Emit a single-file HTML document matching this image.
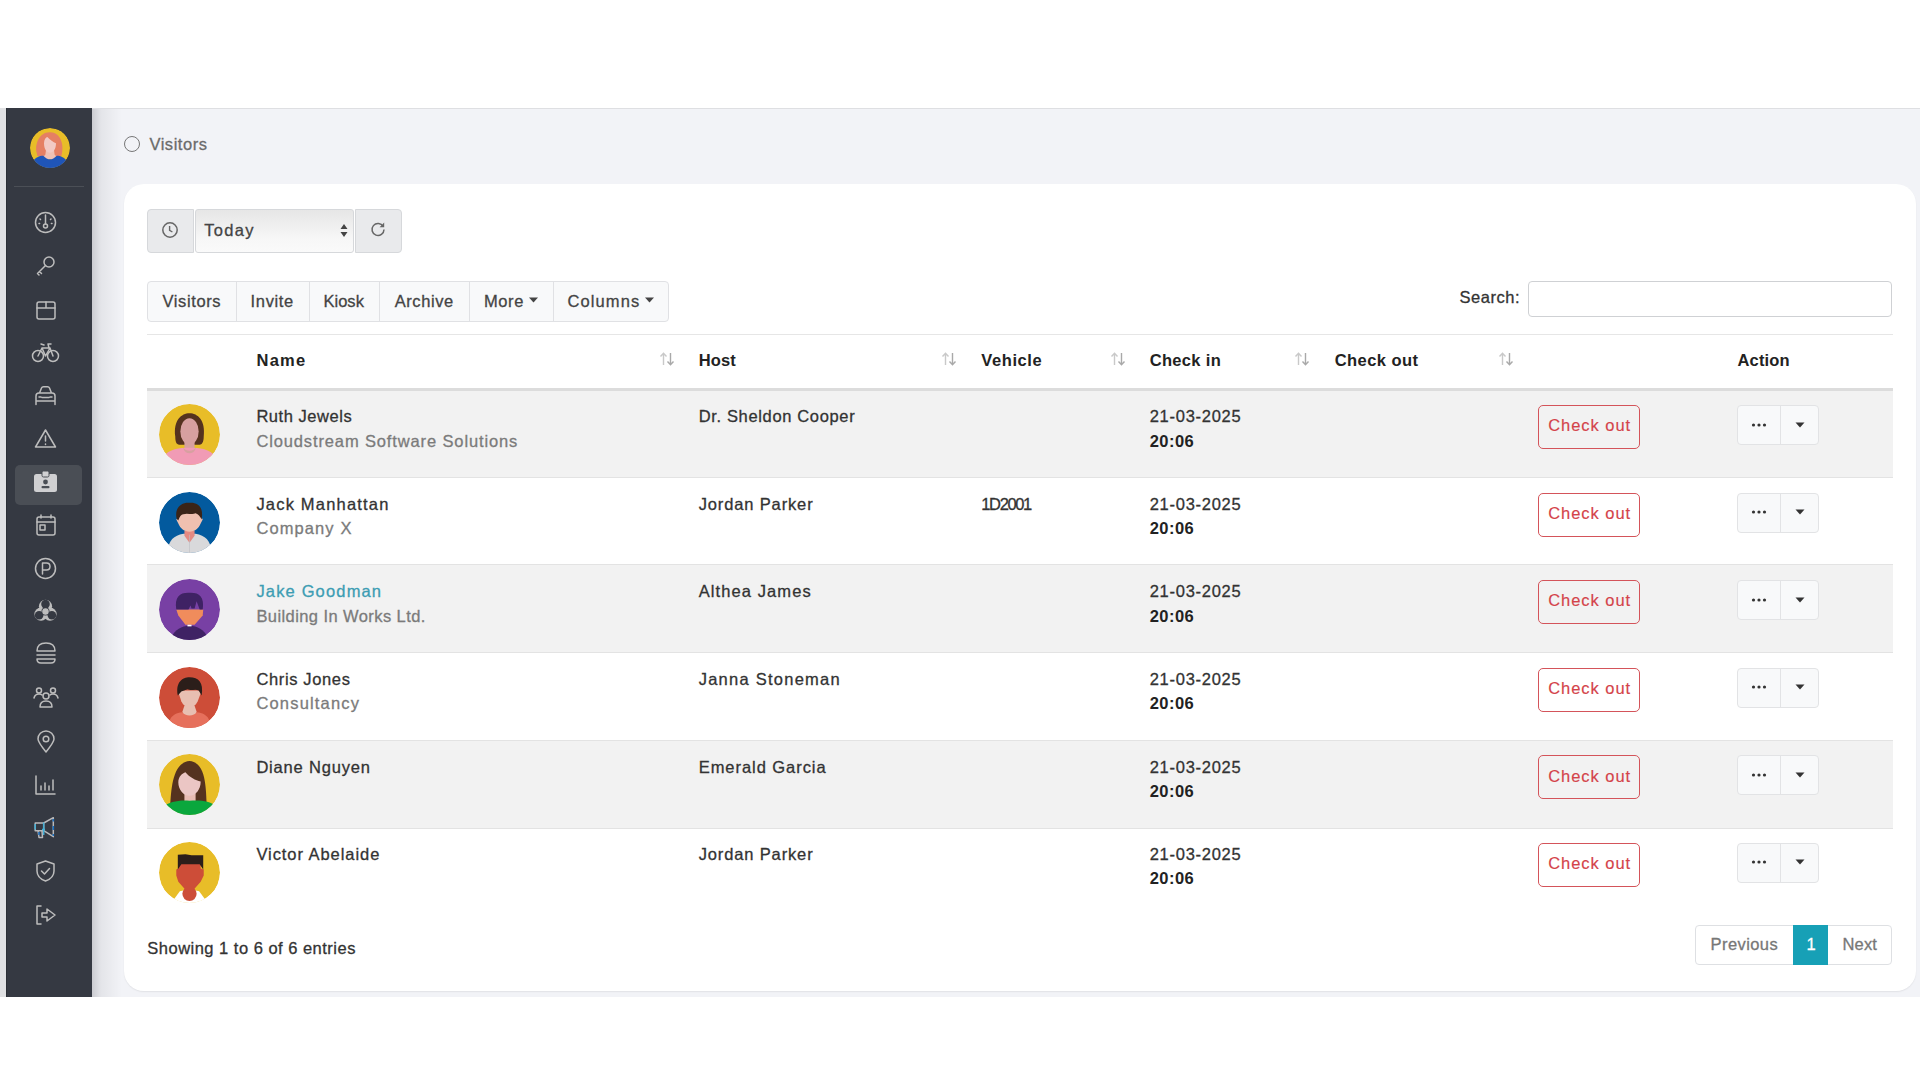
<!DOCTYPE html><html><head><meta charset="utf-8"><style>
*{box-sizing:border-box;margin:0;padding:0}
html,body{width:1920px;height:1080px;overflow:hidden;background:#fff;font-family:"Liberation Sans",sans-serif}
.a{position:absolute}
.t{position:absolute;white-space:nowrap;line-height:1;-webkit-text-stroke:0.3px currentColor}
</style></head><body><div class="a" style="left:0;top:108px;width:6px;height:889px;background:#e0e1e3"></div>
<div class="a" style="left:92px;top:108px;width:1828px;height:889px;background:#f2f3f7;border-top:1px solid #dedfe2"></div>
<div class="a" style="left:92px;top:109px;width:30px;height:888px;background:linear-gradient(90deg,rgba(0,0,10,.16),rgba(0,0,10,.06) 30%,rgba(0,0,0,0))"></div>
<div class="a" style="left:6px;top:108px;width:86px;height:889px;background:#353942;border-left:1px solid #2b2f36"></div>
<div class="a" style="left:30px;top:128px;width:40px;height:40px"><svg width="100%" height="100%" viewBox="0 0 60 60"><defs><clipPath id="cside"><circle cx="30" cy="30" r="30"/></clipPath></defs><g clip-path="url(#cside)"><circle cx="30" cy="30" r="30" fill="#e8bd28"/><path d="M10 37 C7 26 13 6 30 6.5 C45 6 51 24 48 38 L47 42 L11 42Z" fill="#e57f63"/><path d="M24 33 H36 L37 40 Q38 42 41 42 L41 47 L19 47 L19 42 Q22 42 23 40Z" fill="#efc1b4"/><path d="M21 23 C21 17 24 14 26 13.5 C30 18 35 21 39 23 C39 32 35 37 30 37 C25 37 21 32 21 23Z" fill="#f2c9c4"/><path d="M3 51 C8 44 14 41.5 20 41.5 C23 45 27 47 30 47 C33 47 37 45 40 41.5 C46 41.5 52 44 57 51 L57 62 L3 62Z" fill="#1f55b8"/></g></svg></div>
<div class="a" style="left:14px;top:186px;width:70px;height:1px;background:#4b4f56"></div>
<div class="a" style="left:15px;top:465px;width:67px;height:40px;background:#4a4e55;border-radius:5px"></div>
<div class="a" style="left:124px;top:184px;width:1792px;height:807px;background:#fff;border-radius:20px;box-shadow:0 1px 1.5px rgba(0,0,20,.07)"></div>
<div class="a" style="left:147px;top:208.5px;width:47px;height:44px;background:#e9eaec;border:1px solid #d6d8db;border-radius:4px 0 0 4px"></div>
<div class="a" style="left:195px;top:208.5px;width:159px;height:44px;background:linear-gradient(#e6e6e6,#f7f7f7 70%,#fafafa);border:1px solid #d6d8db;border-radius:3px"></div>
<div class="a" style="left:355px;top:208.5px;width:47px;height:44px;background:#e9eaec;border:1px solid #d6d8db;border-radius:0 4px 4px 0"></div>
<svg class="a" style="left:161px;top:221px" width="18" height="18" viewBox="0 0 18 18"><circle cx="9" cy="9" r="7.2" fill="none" stroke="#666" stroke-width="1.5"/><path d="M8.6 5 V9.4 L11.4 11" fill="none" stroke="#666" stroke-width="1.4"/></svg>
<svg class="a" style="left:339px;top:222px" width="10" height="17" viewBox="0 0 10 17"><path d="M1.5 7 L5 2 L8.5 7Z M1.5 10 L5 15 L8.5 10Z" fill="#444"/></svg>
<svg class="a" style="left:369px;top:220px" width="18" height="18" viewBox="0 0 18 18"><path d="M14.2 6.5 A6 6 0 1 0 15 9.5" fill="none" stroke="#666" stroke-width="1.5"/><path d="M15.2 2.6 L15.2 7.2 L10.6 7.2Z" fill="#666"/></svg>
<div class="a" style="left:147px;top:281px;width:522px;height:41px;background:#f8f9fa;border:1px solid #e0e1e4;border-radius:4px"></div>
<div class="a" style="left:235.5px;top:282px;width:1px;height:39px;background:#e0e1e4"></div>
<div class="a" style="left:309px;top:282px;width:1px;height:39px;background:#e0e1e4"></div>
<div class="a" style="left:378.5px;top:282px;width:1px;height:39px;background:#e0e1e4"></div>
<div class="a" style="left:469px;top:282px;width:1px;height:39px;background:#e0e1e4"></div>
<div class="a" style="left:553px;top:282px;width:1px;height:39px;background:#e0e1e4"></div>
<svg class="a" style="left:529px;top:297px" width="9" height="6" viewBox="0 0 9 6"><path d="M0 0.5 H9 L4.5 5.5Z" fill="#444"/></svg>
<svg class="a" style="left:645px;top:297px" width="9" height="6" viewBox="0 0 9 6"><path d="M0 0.5 H9 L4.5 5.5Z" fill="#444"/></svg>
<div class="a" style="left:1528px;top:281px;width:364px;height:36px;background:#fff;border:1px solid #cfd1d4;border-radius:4px"></div>
<div class="a" style="left:147px;top:333.5px;width:1746px;height:1px;background:#e6e6e6"></div>
<div class="a" style="left:147px;top:388px;width:1746px;height:3px;background:#dcdcdc"></div>
<svg class="a" style="left:658.5px;top:352px" width="16" height="14" viewBox="0 0 16 14"><path d="M4.5 13 V1.5 M1.5 4.5 L4.5 1.2 L7.5 4.5" fill="none" stroke="#c9c9c9" stroke-width="1.4"/><path d="M11.5 1 V12.5 M8.5 9.5 L11.5 12.8 L14.5 9.5" fill="none" stroke="#a9a9a9" stroke-width="1.4"/></svg>
<svg class="a" style="left:940.5px;top:352px" width="16" height="14" viewBox="0 0 16 14"><path d="M4.5 13 V1.5 M1.5 4.5 L4.5 1.2 L7.5 4.5" fill="none" stroke="#c9c9c9" stroke-width="1.4"/><path d="M11.5 1 V12.5 M8.5 9.5 L11.5 12.8 L14.5 9.5" fill="none" stroke="#a9a9a9" stroke-width="1.4"/></svg>
<svg class="a" style="left:1110px;top:352px" width="16" height="14" viewBox="0 0 16 14"><path d="M4.5 13 V1.5 M1.5 4.5 L4.5 1.2 L7.5 4.5" fill="none" stroke="#c9c9c9" stroke-width="1.4"/><path d="M11.5 1 V12.5 M8.5 9.5 L11.5 12.8 L14.5 9.5" fill="none" stroke="#a9a9a9" stroke-width="1.4"/></svg>
<svg class="a" style="left:1294px;top:352px" width="16" height="14" viewBox="0 0 16 14"><path d="M4.5 13 V1.5 M1.5 4.5 L4.5 1.2 L7.5 4.5" fill="none" stroke="#c9c9c9" stroke-width="1.4"/><path d="M11.5 1 V12.5 M8.5 9.5 L11.5 12.8 L14.5 9.5" fill="none" stroke="#a9a9a9" stroke-width="1.4"/></svg>
<svg class="a" style="left:1497.5px;top:352px" width="16" height="14" viewBox="0 0 16 14"><path d="M4.5 13 V1.5 M1.5 4.5 L4.5 1.2 L7.5 4.5" fill="none" stroke="#c9c9c9" stroke-width="1.4"/><path d="M11.5 1 V12.5 M8.5 9.5 L11.5 12.8 L14.5 9.5" fill="none" stroke="#a9a9a9" stroke-width="1.4"/></svg>
<div class="a" style="left:147px;top:391.0px;width:1746px;height:86.0px;background:#f2f2f2"></div>
<div class="a" style="left:159px;top:404.0px;width:61px;height:61px"><svg width="100%" height="100%" viewBox="0 0 60 60"><defs><clipPath id="cruth"><circle cx="30" cy="30" r="30"/></clipPath></defs><g clip-path="url(#cruth)"><circle cx="30" cy="30" r="30" fill="#e8bd28"/><path d="M16 32 C14 16 22 9 30 9 C38 9 46 16 44 32 C44 38 42 40 40 40 L20 40 C17 40 16 37 16 32Z" fill="#55321f"/><ellipse cx="30" cy="27" rx="9" ry="13" fill="#d7a0a0"/><rect x="25" y="36" width="10" height="12" fill="#d7a0a0"/><path d="M4 52 C10 44 20 43 30 43 C40 43 50 44 56 52 L56 62 L4 62Z" fill="#f19bb5"/><path d="M24 43 C26 47 34 47 36 43 L36 44 C34 50 26 50 24 44Z" fill="#d7a0a0"/></g></svg></div>
<div class="a" style="left:1538px;top:405.0px;width:102px;height:44px;border:1.3px solid #d4545a;border-radius:5px"></div>
<div class="a" style="left:1737px;top:405.0px;width:82px;height:40px;background:#f8f9fa;border:1px solid #e2e3e5;border-radius:4px"></div>
<div class="a" style="left:1780px;top:406.0px;width:1px;height:38px;background:#e2e3e5"></div>
<svg class="a" style="left:1751px;top:421.5px" width="16" height="6" viewBox="0 0 16 6"><circle cx="2.5" cy="3" r="1.6" fill="#333"/><circle cx="8" cy="3" r="1.6" fill="#333"/><circle cx="13.5" cy="3" r="1.6" fill="#333"/></svg>
<svg class="a" style="left:1795px;top:421.5px" width="10" height="6" viewBox="0 0 10 6"><path d="M0.5 0.5 H9.5 L5 5.5Z" fill="#333"/></svg>
<div class="a" style="left:147px;top:477.0px;width:1746px;height:87.9px;background:#fff"></div>
<div class="a" style="left:147px;top:476.5px;width:1746px;height:1px;background:#e3e3e3"></div>
<div class="a" style="left:159px;top:491.6px;width:61px;height:61px"><svg width="100%" height="100%" viewBox="0 0 60 60"><defs><clipPath id="cjack"><circle cx="30" cy="30" r="30"/></clipPath></defs><g clip-path="url(#cjack)"><circle cx="30" cy="30" r="30" fill="#035a9e"/><path d="M8 62 C9 47 14 43 24 41 L36 41 C46 43 51 47 52 62Z" fill="#d9d9db"/><path d="M25 38 L35 38 L35 43 L30 50 L25 43Z" fill="#e48a82"/><path d="M19 25 C19 20 23 20 30 20 C37 20 42 20 42 25 L43 27 L41 31 C39 36 35 39 30 39 C25 39 21 36 19 31 L17 27Z" fill="#efc0b0"/><path d="M17 24 C16 15 22 10 30 10.5 C38 10 44 14 42 27 C40 24 39 22 36 21 C32 23 28 20 24 22 C21 22 20 26 19 28 C18 27 17 26 17 24Z" fill="#3a2418"/><path d="M30 42 V60" stroke="#bfbfc3" stroke-width="0.6"/></g></svg></div>
<div class="a" style="left:1538px;top:492.6px;width:102px;height:44px;border:1.3px solid #d4545a;border-radius:5px"></div>
<div class="a" style="left:1737px;top:492.6px;width:82px;height:40px;background:#f8f9fa;border:1px solid #e2e3e5;border-radius:4px"></div>
<div class="a" style="left:1780px;top:493.6px;width:1px;height:38px;background:#e2e3e5"></div>
<svg class="a" style="left:1751px;top:509.1px" width="16" height="6" viewBox="0 0 16 6"><circle cx="2.5" cy="3" r="1.6" fill="#333"/><circle cx="8" cy="3" r="1.6" fill="#333"/><circle cx="13.5" cy="3" r="1.6" fill="#333"/></svg>
<svg class="a" style="left:1795px;top:509.1px" width="10" height="6" viewBox="0 0 10 6"><path d="M0.5 0.5 H9.5 L5 5.5Z" fill="#333"/></svg>
<div class="a" style="left:147px;top:564.9px;width:1746px;height:87.9px;background:#f2f2f2"></div>
<div class="a" style="left:147px;top:564.4px;width:1746px;height:1px;background:#e3e3e3"></div>
<div class="a" style="left:159px;top:579.1px;width:61px;height:61px"><svg width="100%" height="100%" viewBox="0 0 60 60"><defs><clipPath id="cjake"><circle cx="30" cy="30" r="30"/></clipPath></defs><g clip-path="url(#cjake)"><circle cx="30" cy="30" r="30" fill="#7840a4"/><path d="M12 57 C16 50 22 46 30 46 C38 46 44 50 48 57 C42 63 18 63 12 57Z" fill="#3f2264"/><path d="M17 30 L43.5 30 L43 36 L35 45 L26 45 L19 36Z" fill="#f08c5c"/><path d="M17 30 C15 17 21 13 30 13.5 C39 13 45 17 43 30 L40 30 L37 22 L35 29 L32 29 L31 26 L29 30Z" fill="#3f2264"/><rect x="28" y="45" width="4" height="1.6" fill="#fff"/></g></svg></div>
<div class="a" style="left:1538px;top:580.1px;width:102px;height:44px;border:1.3px solid #d4545a;border-radius:5px"></div>
<div class="a" style="left:1737px;top:580.1px;width:82px;height:40px;background:#f8f9fa;border:1px solid #e2e3e5;border-radius:4px"></div>
<div class="a" style="left:1780px;top:581.1px;width:1px;height:38px;background:#e2e3e5"></div>
<svg class="a" style="left:1751px;top:596.6px" width="16" height="6" viewBox="0 0 16 6"><circle cx="2.5" cy="3" r="1.6" fill="#333"/><circle cx="8" cy="3" r="1.6" fill="#333"/><circle cx="13.5" cy="3" r="1.6" fill="#333"/></svg>
<svg class="a" style="left:1795px;top:596.6px" width="10" height="6" viewBox="0 0 10 6"><path d="M0.5 0.5 H9.5 L5 5.5Z" fill="#333"/></svg>
<div class="a" style="left:147px;top:652.7px;width:1746px;height:87.8px;background:#fff"></div>
<div class="a" style="left:147px;top:652.2px;width:1746px;height:1px;background:#e3e3e3"></div>
<div class="a" style="left:159px;top:666.6px;width:61px;height:61px"><svg width="100%" height="100%" viewBox="0 0 60 60"><defs><clipPath id="cchris"><circle cx="30" cy="30" r="30"/></clipPath></defs><g clip-path="url(#cchris)"><circle cx="30" cy="30" r="30" fill="#cd4d38"/><path d="M9 62 C9 48 15 44 30 44 C45 44 51 48 51 62Z" fill="#e6705c"/><path d="M25 38 L35 38 L37 44 C35 49 25 49 23 44Z" fill="#e8bfb2"/><path d="M18.5 23 L42 23 L38 34 C36 38 33 40 30 40 C27 40 24 38 22 34Z" fill="#e8bfb2"/><path d="M18.5 28 C16 15 23 10 30 10 C39 10 44 15 42 28 L39 23 C35 21 32 24 28 22 L22 24Z" fill="#2b1e1a"/></g></svg></div>
<div class="a" style="left:1538px;top:667.6px;width:102px;height:44px;border:1.3px solid #d4545a;border-radius:5px"></div>
<div class="a" style="left:1737px;top:667.6px;width:82px;height:40px;background:#f8f9fa;border:1px solid #e2e3e5;border-radius:4px"></div>
<div class="a" style="left:1780px;top:668.6px;width:1px;height:38px;background:#e2e3e5"></div>
<svg class="a" style="left:1751px;top:684.1px" width="16" height="6" viewBox="0 0 16 6"><circle cx="2.5" cy="3" r="1.6" fill="#333"/><circle cx="8" cy="3" r="1.6" fill="#333"/><circle cx="13.5" cy="3" r="1.6" fill="#333"/></svg>
<svg class="a" style="left:1795px;top:684.1px" width="10" height="6" viewBox="0 0 10 6"><path d="M0.5 0.5 H9.5 L5 5.5Z" fill="#333"/></svg>
<div class="a" style="left:147px;top:740.5px;width:1746px;height:87.9px;background:#f2f2f2"></div>
<div class="a" style="left:147px;top:740.0px;width:1746px;height:1px;background:#e3e3e3"></div>
<div class="a" style="left:159px;top:754.2px;width:61px;height:61px"><svg width="100%" height="100%" viewBox="0 0 60 60"><defs><clipPath id="cdiane"><circle cx="30" cy="30" r="30"/></clipPath></defs><g clip-path="url(#cdiane)"><circle cx="30" cy="30" r="30" fill="#e8bd28"/><path d="M11 51 C12 36 13 8 30 7 C47 8 46 36 47 50 Z" fill="#55321f"/><rect x="25" y="35" width="11" height="12" fill="#e8bbb2"/><path d="M19 28 C19 22 23 19 26 18 C30 23 36 26 41 27 C41 35 36 41 30 41 C24 41 19 35 19 28Z" fill="#ebc6c4"/><path d="M4 52 C10 47 20 45 30 46 C40 45 50 46 56 51 L56 62 L4 62Z" fill="#0aa73d"/></g></svg></div>
<div class="a" style="left:1538px;top:755.2px;width:102px;height:44px;border:1.3px solid #d4545a;border-radius:5px"></div>
<div class="a" style="left:1737px;top:755.2px;width:82px;height:40px;background:#f8f9fa;border:1px solid #e2e3e5;border-radius:4px"></div>
<div class="a" style="left:1780px;top:756.2px;width:1px;height:38px;background:#e2e3e5"></div>
<svg class="a" style="left:1751px;top:771.7px" width="16" height="6" viewBox="0 0 16 6"><circle cx="2.5" cy="3" r="1.6" fill="#333"/><circle cx="8" cy="3" r="1.6" fill="#333"/><circle cx="13.5" cy="3" r="1.6" fill="#333"/></svg>
<svg class="a" style="left:1795px;top:771.7px" width="10" height="6" viewBox="0 0 10 6"><path d="M0.5 0.5 H9.5 L5 5.5Z" fill="#333"/></svg>
<div class="a" style="left:147px;top:828.4px;width:1746px;height:87.9px;background:#fff"></div>
<div class="a" style="left:147px;top:827.9px;width:1746px;height:1px;background:#e3e3e3"></div>
<div class="a" style="left:159px;top:841.8px;width:61px;height:61px"><svg width="100%" height="100%" viewBox="0 0 60 60"><defs><clipPath id="cvictor"><circle cx="30" cy="30" r="30"/></clipPath></defs><g clip-path="url(#cvictor)"><circle cx="30" cy="30" r="30" fill="#e8bd28"/><path d="M12 60 L20.5 48.5 L27 47 L33 47 L39.5 48.5 L48 60 L48 64 L12 64Z" fill="#fff"/><circle cx="30" cy="51" r="7" fill="#cd4d38"/><path d="M26 47 L19 39 L17 33 L17 27 L19 26 L19 18 L41 18 L41 26 L44 27 L44 33 L41 39 L34 47Z" fill="#cd4d38"/><path d="M18.5 27 L18.5 12.5 L26 12 L32 13 L43.5 13 L43.5 27 L40 22 L22 22Z" fill="#2b1e1a"/></g></svg></div>
<div class="a" style="left:1538px;top:842.8px;width:102px;height:44px;border:1.3px solid #d4545a;border-radius:5px"></div>
<div class="a" style="left:1737px;top:842.8px;width:82px;height:40px;background:#f8f9fa;border:1px solid #e2e3e5;border-radius:4px"></div>
<div class="a" style="left:1780px;top:843.8px;width:1px;height:38px;background:#e2e3e5"></div>
<svg class="a" style="left:1751px;top:859.2px" width="16" height="6" viewBox="0 0 16 6"><circle cx="2.5" cy="3" r="1.6" fill="#333"/><circle cx="8" cy="3" r="1.6" fill="#333"/><circle cx="13.5" cy="3" r="1.6" fill="#333"/></svg>
<svg class="a" style="left:1795px;top:859.2px" width="10" height="6" viewBox="0 0 10 6"><path d="M0.5 0.5 H9.5 L5 5.5Z" fill="#333"/></svg>
<div class="a" style="left:1695px;top:925px;width:197px;height:40px;background:#fff;border:1px solid #dee0e3;border-radius:4px"></div>
<div class="a" style="left:1793px;top:925px;width:35px;height:40px;background:#17a0b6"></div>
<div class="a" style="left:124px;top:136px;width:16px;height:16px;border:1.5px solid #777;border-radius:50%"></div>
<svg class="a" style="left:34px;top:211px" width="23" height="23" viewBox="0 0 23 23" fill="none" stroke="#bdbdbd" stroke-width="1.5" stroke-linecap="round" stroke-linejoin="round"><circle cx="11.5" cy="11.5" r="10"/><path d="M11.5 4 V13"/><circle cx="11.5" cy="15" r="2"/><path d="M6 8 l.5 .5 M17 8 l-.5 .5 M5 12.5 h.6 M18 12.5 h-.6"/></svg>
<svg class="a" style="left:35px;top:254px" width="22" height="23" viewBox="0 0 22 23" fill="none" stroke="#bdbdbd" stroke-width="1.5" stroke-linecap="round" stroke-linejoin="round"><circle cx="14" cy="8" r="5"/><path d="M10.5 11.5 L2.5 19.5 M4.5 17.5 L6.5 19.5 M2.5 19.5 L4 21"/></svg>
<svg class="a" style="left:35px;top:299px" width="22" height="22" viewBox="0 0 22 22" fill="none" stroke="#bdbdbd" stroke-width="1.5" stroke-linecap="round" stroke-linejoin="round"><rect x="2" y="3" width="18" height="17" rx="2"/><path d="M2 9 H20 M11 3 V9"/></svg>
<svg class="a" style="left:31px;top:341px" width="29" height="22" viewBox="0 0 29 22" fill="none" stroke="#bdbdbd" stroke-width="1.5" stroke-linecap="round" stroke-linejoin="round"><circle cx="7" cy="15" r="5.5"/><circle cx="22" cy="15" r="5.5"/><path d="M7 15 L11 7 H19 L22 15 M11 7 L14.5 15 L19 7 M13 4 L10 3 M18 7 L17 3 H20"/></svg>
<svg class="a" style="left:34px;top:385px" width="23" height="22" viewBox="0 0 23 22" fill="none" stroke="#bdbdbd" stroke-width="1.5" stroke-linecap="round" stroke-linejoin="round"><path d="M5.5 8 L7.5 3 Q8 1.8 9.5 1.8 H13.5 Q15 1.8 15.5 3 L17.5 8 M2 19.5 V11 Q2 8 5 8 H18 Q21 8 21 11 V19.5 M2 16 H21 M5 12 h2 M16 12 h2 M8 12.5 H15"/></svg>
<svg class="a" style="left:34px;top:428px" width="23" height="21" viewBox="0 0 23 21" fill="none" stroke="#bdbdbd" stroke-width="1.5" stroke-linecap="round" stroke-linejoin="round"><path d="M11.5 2 L21.5 19 H1.5Z M11.5 8 V13 M11.5 16 v.5"/></svg>
<svg class="a" style="left:33px;top:470px" width="25" height="24" viewBox="0 0 25 24"><rect x="1" y="4" width="23" height="18" rx="2.5" fill="#d0d0d2"/><rect x="9" y="1" width="7" height="6" rx="1.5" fill="#d0d0d2" stroke="#4a4e55" stroke-width="1"/><circle cx="12.5" cy="12" r="2.4" fill="#4a4e55"/><rect x="8.5" y="16" width="8" height="2.2" rx="1" fill="#4a4e55"/></svg>
<svg class="a" style="left:35px;top:513px" width="22" height="24" viewBox="0 0 22 24" fill="none" stroke="#bdbdbd" stroke-width="1.5" stroke-linecap="round" stroke-linejoin="round"><rect x="2" y="4" width="18" height="18" rx="2"/><path d="M2 9 H20 M6 2 V5 M16 2 V5"/><rect x="5" y="12" width="5" height="5"/></svg>
<svg class="a" style="left:34px;top:557px" width="23" height="23" viewBox="0 0 23 23" fill="none" stroke="#bdbdbd" stroke-width="1.5" stroke-linecap="round" stroke-linejoin="round"><circle cx="11.5" cy="11.5" r="10"/><path d="M8.5 17 V6 H12.5 Q16 6 16 9.5 Q16 13 12.5 13 H8.5"/></svg>
<svg class="a" style="left:33px;top:599px" width="25" height="25" viewBox="0 0 25 25"><defs><mask id="bhm"><rect width="25" height="25" fill="black"/><circle cx="12.50" cy="7.30" r="6.6" fill="white"/><circle cx="17.00" cy="15.10" r="6.6" fill="white"/><circle cx="8.00" cy="15.10" r="6.6" fill="white"/><circle cx="12.50" cy="5.10" r="4.3" fill="black"/><circle cx="18.91" cy="16.20" r="4.3" fill="black"/><circle cx="6.09" cy="16.20" r="4.3" fill="black"/><circle cx="12.5" cy="12.5" r="3.4" fill="none" stroke="black" stroke-width="1.3"/></mask></defs><rect width="25" height="25" fill="#bdbdbd" mask="url(#bhm)"/><circle cx="12.5" cy="12.5" r="2.6" fill="none" stroke="#bdbdbd" stroke-width="1.2"/></svg>
<svg class="a" style="left:35px;top:641px" width="22" height="24" viewBox="0 0 22 24" fill="none" stroke="#bdbdbd" stroke-width="1.5" stroke-linecap="round" stroke-linejoin="round"><path d="M2 10 Q2 2 11 2 Q20 2 20 10Z M2 14 H20 M2 18 Q2 22 6 22 H16 Q20 22 20 18Z"/></svg>
<svg class="a" style="left:32px;top:686px" width="28" height="24" viewBox="0 0 28 24" fill="none" stroke="#bdbdbd" stroke-width="1.5" stroke-linecap="round" stroke-linejoin="round"><circle cx="7" cy="4.5" r="2.5"/><circle cx="21" cy="4.5" r="2.5"/><circle cx="14" cy="10" r="3"/><path d="M2 12 Q3 8 7 8 Q9 8 10 9 M26 12 Q25 8 21 8 Q19 8 18 9 M8 21 Q8 15 14 15 Q20 15 20 21Z"/></svg>
<svg class="a" style="left:37px;top:730px" width="18" height="24" viewBox="0 0 18 24" fill="none" stroke="#bdbdbd" stroke-width="1.5" stroke-linecap="round" stroke-linejoin="round"><path d="M9 22 Q1 12 1 9 A8 8 0 0 1 17 9 Q17 12 9 22Z"/><circle cx="9" cy="9" r="2.8"/></svg>
<svg class="a" style="left:34px;top:774px" width="23" height="22" viewBox="0 0 23 22" fill="none" stroke="#bdbdbd" stroke-width="1.5" stroke-linecap="round" stroke-linejoin="round"><path d="M2 2 V20 H21 M7 16 V12 M11 16 V9 M15 16 V12 M19 16 V6"/></svg>
<svg class="a" style="left:34px;top:816px" width="22" height="24" viewBox="0 0 22 24" fill="none" stroke-width="1.5" stroke-linejoin="round"><path d="M1.2 7 H9.7 V14.7 H1.2Z M9.7 7 L19.3 1.7 V20.7 L9.7 14.7 M4 14.7 L5 21.5 H8.5 L8 14.7" stroke="#b9b9bb"/><path d="M1.2 8 V13.5 M9.7 6.5 V19 M8 13.5 H11" stroke="#45b0d6"/><path d="M19.3 3 V5.5 M19.3 10 V14 M19.3 18 V20 M5 16 V19" stroke="#1a6fc0"/></svg>
<svg class="a" style="left:35px;top:859px" width="21" height="24" viewBox="0 0 21 24" fill="none" stroke="#bdbdbd" stroke-width="1.5" stroke-linecap="round" stroke-linejoin="round"><path d="M10.5 2 L19 5 V12 Q19 19 10.5 22 Q2 19 2 12 V5Z M6.5 12 L9.5 15 L14.5 9.5"/></svg>
<svg class="a" style="left:34px;top:904px" width="23" height="22" viewBox="0 0 23 22" fill="none" stroke="#bdbdbd" stroke-width="1.5" stroke-linecap="round" stroke-linejoin="round"><path d="M7 2 H3 V20 H7 M8 9 H13 V5 L21 11 L13 17 V13 H8Z"/></svg><div class="t" style="left:149.4px;top:136.03px;font-size:16.5px;font-weight:400;color:#6b6b6b;letter-spacing:0.54px">Visitors</div>
<div class="t" style="left:204.2px;top:221.63px;font-size:16.5px;font-weight:400;color:#444;letter-spacing:1.29px">Today</div>
<div class="t" style="left:162.5px;top:292.53px;font-size:16.5px;font-weight:400;color:#444;letter-spacing:0.61px">Visitors</div>
<div class="t" style="left:250.6px;top:292.53px;font-size:16.5px;font-weight:400;color:#444;letter-spacing:0.65px">Invite</div>
<div class="t" style="left:323.4px;top:292.53px;font-size:16.5px;font-weight:400;color:#444;letter-spacing:0.04px">Kiosk</div>
<div class="t" style="left:394.7px;top:292.53px;font-size:16.5px;font-weight:400;color:#444;letter-spacing:0.59px">Archive</div>
<div class="t" style="left:484.0px;top:292.53px;font-size:16.5px;font-weight:400;color:#444;letter-spacing:0.57px">More</div>
<div class="t" style="left:567.5px;top:292.53px;font-size:16.5px;font-weight:400;color:#444;letter-spacing:1.10px">Columns</div>
<div class="t" style="left:1459.5px;top:289.28px;font-size:16.5px;font-weight:400;color:#333;letter-spacing:0.52px">Search:</div>
<div class="t" style="left:256.4px;top:352.33px;font-size:16.5px;font-weight:700;color:#222;letter-spacing:1.32px;-webkit-text-stroke:0">Name</div>
<div class="t" style="left:698.7px;top:352.33px;font-size:16.5px;font-weight:700;color:#222;letter-spacing:0.14px;-webkit-text-stroke:0">Host</div>
<div class="t" style="left:981.3px;top:352.33px;font-size:16.5px;font-weight:700;color:#222;letter-spacing:0.59px;-webkit-text-stroke:0">Vehicle</div>
<div class="t" style="left:1149.7px;top:352.33px;font-size:16.5px;font-weight:700;color:#222;letter-spacing:0.33px;-webkit-text-stroke:0">Check in</div>
<div class="t" style="left:1334.7px;top:352.33px;font-size:16.5px;font-weight:700;color:#222;letter-spacing:0.44px;-webkit-text-stroke:0">Check out</div>
<div class="t" style="left:1737.5px;top:352.33px;font-size:16.5px;font-weight:700;color:#222;letter-spacing:0.17px;-webkit-text-stroke:0">Action</div>
<div class="t" style="left:256.4px;top:408.33px;font-size:16.5px;font-weight:400;color:#333;letter-spacing:0.54px">Ruth Jewels</div>
<div class="t" style="left:256.4px;top:432.63px;font-size:16.5px;font-weight:400;color:#7b7b7b;letter-spacing:0.87px">Cloudstream Software Solutions</div>
<div class="t" style="left:698.7px;top:408.33px;font-size:16.5px;font-weight:400;color:#333;letter-spacing:0.65px">Dr. Sheldon Cooper</div>
<div class="t" style="left:1149.7px;top:408.33px;font-size:16.5px;font-weight:400;color:#333;letter-spacing:0.73px">21-03-2025</div>
<div class="t" style="left:1149.7px;top:432.63px;font-size:16.5px;font-weight:700;color:#222;letter-spacing:0.45px;-webkit-text-stroke:0">20:06</div>
<div class="t" style="left:1548.2px;top:417.33px;font-size:16.5px;font-weight:400;color:#d4434a;letter-spacing:0.96px;-webkit-text-stroke:0.15px currentColor">Check out</div>
<div class="t" style="left:256.4px;top:495.88px;font-size:16.5px;font-weight:400;color:#333;letter-spacing:1.19px">Jack Manhattan</div>
<div class="t" style="left:256.4px;top:520.18px;font-size:16.5px;font-weight:400;color:#7b7b7b;letter-spacing:1.10px">Company X</div>
<div class="t" style="left:698.7px;top:495.88px;font-size:16.5px;font-weight:400;color:#333;letter-spacing:0.86px">Jordan Parker</div>
<div class="t" style="left:981.3px;top:495.88px;font-size:16.5px;font-weight:400;color:#333;letter-spacing:-1.36px">1D2001</div>
<div class="t" style="left:1149.7px;top:495.88px;font-size:16.5px;font-weight:400;color:#333;letter-spacing:0.73px">21-03-2025</div>
<div class="t" style="left:1149.7px;top:520.18px;font-size:16.5px;font-weight:700;color:#222;letter-spacing:0.45px;-webkit-text-stroke:0">20:06</div>
<div class="t" style="left:1548.2px;top:504.88px;font-size:16.5px;font-weight:400;color:#d4434a;letter-spacing:0.96px;-webkit-text-stroke:0.15px currentColor">Check out</div>
<div class="t" style="left:256.4px;top:583.43px;font-size:16.5px;font-weight:400;color:#3d9db3;letter-spacing:1.16px">Jake Goodman</div>
<div class="t" style="left:256.4px;top:607.73px;font-size:16.5px;font-weight:400;color:#7b7b7b;letter-spacing:0.42px">Building In Works Ltd.</div>
<div class="t" style="left:698.7px;top:583.43px;font-size:16.5px;font-weight:400;color:#333;letter-spacing:1.09px">Althea James</div>
<div class="t" style="left:1149.7px;top:583.43px;font-size:16.5px;font-weight:400;color:#333;letter-spacing:0.73px">21-03-2025</div>
<div class="t" style="left:1149.7px;top:607.73px;font-size:16.5px;font-weight:700;color:#222;letter-spacing:0.45px;-webkit-text-stroke:0">20:06</div>
<div class="t" style="left:1548.2px;top:592.43px;font-size:16.5px;font-weight:400;color:#d4434a;letter-spacing:0.96px;-webkit-text-stroke:0.15px currentColor">Check out</div>
<div class="t" style="left:256.4px;top:670.98px;font-size:16.5px;font-weight:400;color:#333;letter-spacing:0.64px">Chris Jones</div>
<div class="t" style="left:256.4px;top:695.28px;font-size:16.5px;font-weight:400;color:#7b7b7b;letter-spacing:1.18px">Consultancy</div>
<div class="t" style="left:698.7px;top:670.98px;font-size:16.5px;font-weight:400;color:#333;letter-spacing:1.25px">Janna Stoneman</div>
<div class="t" style="left:1149.7px;top:670.98px;font-size:16.5px;font-weight:400;color:#333;letter-spacing:0.73px">21-03-2025</div>
<div class="t" style="left:1149.7px;top:695.28px;font-size:16.5px;font-weight:700;color:#222;letter-spacing:0.45px;-webkit-text-stroke:0">20:06</div>
<div class="t" style="left:1548.2px;top:679.98px;font-size:16.5px;font-weight:400;color:#d4434a;letter-spacing:0.96px;-webkit-text-stroke:0.15px currentColor">Check out</div>
<div class="t" style="left:256.4px;top:758.53px;font-size:16.5px;font-weight:400;color:#333;letter-spacing:0.81px">Diane Nguyen</div>
<div class="t" style="left:698.7px;top:758.53px;font-size:16.5px;font-weight:400;color:#333;letter-spacing:0.95px">Emerald Garcia</div>
<div class="t" style="left:1149.7px;top:758.53px;font-size:16.5px;font-weight:400;color:#333;letter-spacing:0.73px">21-03-2025</div>
<div class="t" style="left:1149.7px;top:782.83px;font-size:16.5px;font-weight:700;color:#222;letter-spacing:0.45px;-webkit-text-stroke:0">20:06</div>
<div class="t" style="left:1548.2px;top:767.53px;font-size:16.5px;font-weight:400;color:#d4434a;letter-spacing:0.96px;-webkit-text-stroke:0.15px currentColor">Check out</div>
<div class="t" style="left:256.4px;top:846.08px;font-size:16.5px;font-weight:400;color:#333;letter-spacing:0.94px">Victor Abelaide</div>
<div class="t" style="left:698.7px;top:846.08px;font-size:16.5px;font-weight:400;color:#333;letter-spacing:0.86px">Jordan Parker</div>
<div class="t" style="left:1149.7px;top:846.08px;font-size:16.5px;font-weight:400;color:#333;letter-spacing:0.73px">21-03-2025</div>
<div class="t" style="left:1149.7px;top:870.38px;font-size:16.5px;font-weight:700;color:#222;letter-spacing:0.45px;-webkit-text-stroke:0">20:06</div>
<div class="t" style="left:1548.2px;top:855.08px;font-size:16.5px;font-weight:400;color:#d4434a;letter-spacing:0.96px;-webkit-text-stroke:0.15px currentColor">Check out</div>
<div class="t" style="left:147.3px;top:940.23px;font-size:16.5px;font-weight:400;color:#333;letter-spacing:0.49px">Showing 1 to 6 of 6 entries</div>
<div class="t" style="left:1710.6px;top:936.03px;font-size:16.5px;font-weight:400;color:#777;letter-spacing:0.41px">Previous</div>
<div class="t" style="left:1842.5px;top:936.03px;font-size:16.5px;font-weight:400;color:#777;letter-spacing:0.15px">Next</div>
<div class="t" style="left:1806.5px;top:936.03px;font-size:16.5px;font-weight:400;color:#fff;letter-spacing:0.00px">1</div></body></html>
